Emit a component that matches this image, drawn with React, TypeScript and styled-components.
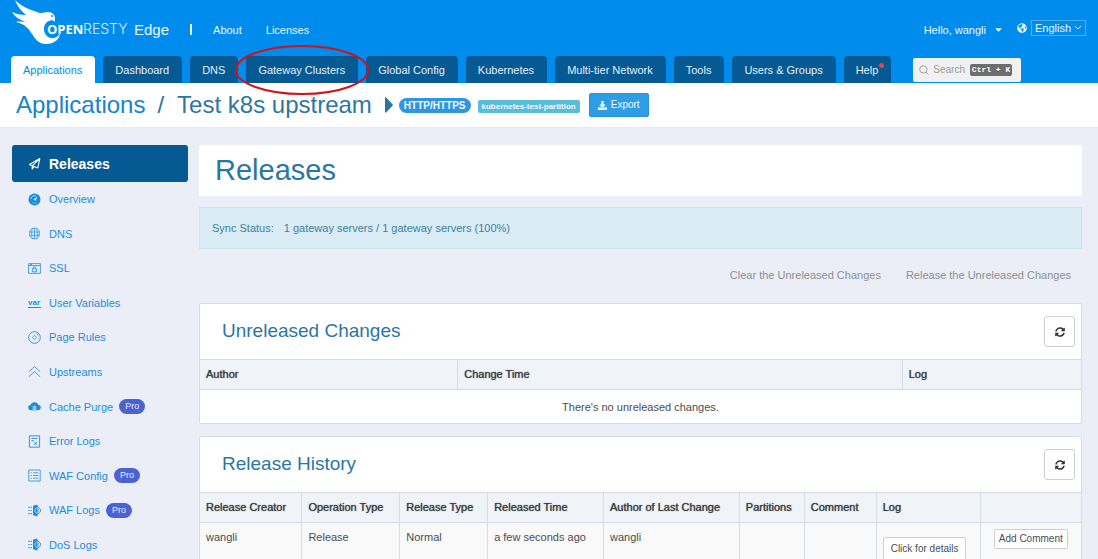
import React from "react";
import styled, { createGlobalStyle, css } from "styled-components";
import { FaDownload, FaGlobeAmericas, FaCaretDown, FaSyncAlt } from "react-icons/fa";

const color = {
  brand: "#008ced",
  navy: "#055a94",
  page: "#ebeef6",
  heading: "#2c76a3",
  link: "#1b8ddb",
  line: "#d5dde2",
  text: "#4a4d50",
};

const GlobalStyle = createGlobalStyle`
  *, *::before, *::after { box-sizing: border-box; }
  body {
    margin: 0;
    background: ${color.page};
    color: ${color.text};
    font: 11px/16px "Liberation Sans", Arial, sans-serif;
  }
  h1, h2, ul, p { margin: 0; padding: 0; font-weight: 400; }
  ul { list-style: none; }
  a { color: inherit; text-decoration: none; }
  button, input, select { font: inherit; color: inherit; }
`;

const Header = styled.header`
  background: ${color.brand};
  color: #e9f6ff;
`;

const TopBar = styled.div`
  display: flex;
  align-items: center;
  height: 56px;
  padding: 0 12px;
`;

const LogoLink = styled.a`
  display: flex;
  align-self: flex-start;
`;

const ProductName = styled.span`
  margin: 3px 0 0 6px;
  font-size: 15px;
`;

const Divider = styled.span`
  width: 2px;
  height: 11px;
  margin: 3px 21px 0 21px;
  background: #e9f6ff;
`;

const TopLinks = styled.nav`
  display: flex;
  gap: 24px;
  margin-top: 3px;
`;

const Account = styled.div`
  display: flex;
  align-items: center;
  margin-left: auto;
`;

const UserButton = styled.button`
  display: flex;
  align-items: center;
  gap: 7px;
  margin: 3px 13px 0 0;
  padding: 0;
  border: 0;
  background: none;
`;

const LanguageField = styled.label`
  display: flex;
  align-items: center;
  gap: 4px;
`;

const LanguageBox = styled.span`
  display: flex;
  align-items: center;
  width: 55px;
  height: 16px;
  padding: 0 3px;
  border: 1px solid #4fb2f5;

  select {
    flex: 1;
    min-width: 0;
    padding: 0;
    border: 0;
    background: none;
    appearance: none;
    line-height: 14px;
  }
  svg { flex: none; }
`;

const TabBar = styled.nav`
  display: flex;
  align-items: flex-end;
  gap: 8px;
  height: 27px;
  padding: 0 11px;
`;

const Tab = styled.a<{ $active?: boolean }>`
  position: relative;
  height: 27px;
  padding: 0 13px 0 12px;
  border-radius: 4px 4px 0 0;
  background: ${(p) => (p.$active ? "#fff" : color.navy)};
  color: ${(p) => (p.$active ? color.brand : "#e4eff7")};
  line-height: 28px;
  white-space: nowrap;
`;

const Highlight = styled.svg`
  position: absolute;
  z-index: 2;
  top: 50%;
  left: 50%;
  transform: translate(-50%, -50%);
  pointer-events: none;
`;

const NoticeDot = styled.span`
  position: absolute;
  top: 7px;
  right: 7px;
  width: 5px;
  height: 5px;
  border-radius: 50%;
  background: #e8453c;
`;

const SearchBox = styled.label`
  display: flex;
  align-items: center;
  gap: 4px;
  width: 108px;
  height: 24px;
  margin: 0 0 1px 14px;
  padding: 0 9px 0 6px;
  border-radius: 2px;
  background: #f1f1f1;
  color: #9b9b9b;
  font-size: 10px;

  input {
    flex: 1;
    min-width: 0;
    padding: 0;
    border: 0;
    background: none;
    outline: 0;
  }
  input::placeholder { color: #9b9b9b; opacity: 1; }
`;

const Shortcut = styled.kbd`
  padding: 0 2px;
  border-radius: 2px;
  background: #6d6d6d;
  color: #fff;
  font: bold 8px/12px "Liberation Mono", monospace;
  white-space: nowrap;
`;

const Breadcrumb = styled.div`
  display: flex;
  align-items: center;
  height: 45px;
  padding: 0 16px;
  border-bottom: 1px solid #e6e9f1;
  background: #fff;
  color: ${color.heading};
  font-size: 24px;
  line-height: 32px;

  > a { color: #1583cd; }
  > h1 { font-size: inherit; }
  > svg { margin: 0 6px 0 13px; }
`;

const Slash = styled.span`
  margin: 0 13px 0 12px;
`;

const ProtocolTag = styled.span`
  padding: 0 5px;
  border-radius: 8px;
  background: #2f96de;
  color: #eef8ff;
  font: bold 10px/15px "Liberation Sans", Arial, sans-serif;
`;

const PartitionTag = styled.span`
  margin: 2px 9px 0 7px;
  padding: 0 4px;
  border-radius: 2px;
  background: #5abcd8;
  color: #eefaff;
  font: bold 8px/13px "Liberation Sans", Arial, sans-serif;
`;

const ExportButton = styled.button`
  display: flex;
  align-items: center;
  gap: 4px;
  height: 24px;
  padding: 0 8px;
  border: 1px solid #2793dc;
  border-radius: 2px;
  background: #2f9de6;
  color: #eef8ff;
  font-size: 10px;
  line-height: 14px;
`;

const Layout = styled.div`
  display: grid;
  grid-template-columns: 176px minmax(0, 1fr);
  gap: 11px;
  padding: 17px 16px 17px 12px;
`;

const SideList = styled.ul`
  display: grid;
  grid-auto-rows: 1fr;
  height: 380px;
`;

const sideRow = css`
  display: flex;
  align-items: center;
  gap: 8px;
  padding-left: 16px;
  svg { flex: none; }
`;

const SideCurrent = styled.a`
  ${sideRow}
  height: 37px;
  border-radius: 3px;
  background: ${color.navy};
  color: #fff;
  font-size: 14px;
  font-weight: 700;
`;

const SideItem = styled.a`
  ${sideRow}
  height: 100%;
  color: ${color.link};
`;

const ProBadge = styled.span`
  margin-left: -2px;
  padding: 0 6px;
  border-radius: 8px;
  background: #4b63d2;
  color: #e6eaff;
  font-size: 9px;
  line-height: 15px;
`;

const VarIcon = styled.span`
  width: 13px;
  border-bottom: 1px solid currentColor;
  font-size: 8px;
  font-weight: 700;
  line-height: 9px;
`;

const PageTitle = styled.h1`
  padding: 5px 16px 6px;
  background: #fff;
  color: ${color.heading};
  font-size: 29px;
  line-height: 40px;
`;

const SyncStatus = styled.p`
  display: flex;
  gap: 10px;
  margin-top: 11px;
  padding: 11px 12px;
  border: 1px solid #c9e7f0;
  background: #d9ecf5;
  color: #41819f;
  line-height: 18px;
`;

const Actions = styled.div`
  display: flex;
  justify-content: flex-end;
  gap: 25px;
  margin: 17px 11px 19px 0;

  button {
    padding: 0;
    border: 0;
    background: none;
    color: #8d9094;
    line-height: 18px;
  }
`;

const Panel = styled.section`
  border: 1px solid ${color.line};
  border-radius: 2px;
  background: #fff;
  & + & { margin-top: 12px; }
`;

const PanelHead = styled.div`
  display: flex;
  align-items: center;
  justify-content: space-between;
  height: 55px;
  padding: 0 6px 0 22px;

  h2 {
    padding-bottom: 2px;
    color: ${color.heading};
    font-size: 19px;
    line-height: 24px;
  }
`;

const RefreshButton = styled.button`
  display: grid;
  place-items: center;
  width: 31px;
  height: 31px;
  padding: 0;
  border: 1px solid #cfcfcf;
  border-radius: 3px;
  background: #fff;
  color: #333;
`;

const Table = styled.table`
  width: 100%;
  border-collapse: collapse;
  table-layout: fixed;

  th, td {
    padding: 5px 6px 6px;
    border-left: 1px solid ${color.line};
    text-align: left;
    line-height: 18px;
    white-space: nowrap;
    vertical-align: top;
  }
  th {
    border-top: 1px solid ${color.line};
    border-bottom: 1px solid ${color.line};
    background: #f0f3f7;
    color: #3c3f42;
    font-weight: 400;
    text-shadow: 0 0 1px #3c3f42;
  }
  th:first-child, td:first-child { border-left: 0; }
`;

const Col = styled.col<{ $share: number }>`
  width: calc(100% * ${(p) => p.$share} / 882);
`;

const EmptyRow = styled.tr`
  && td {
    padding: 8px 8px 7px;
    text-align: center;
  }
`;

const RecordRow = styled.tr`
  background: #f9f9f9;
`;

const ActionCell = styled.td<{ $drop?: boolean }>`
  && {
    padding-top: ${(p) => (p.$drop ? 14 : 6)}px;
    ${(p) => !p.$drop && "text-align: center;"}
  }
`;

const SmallButton = styled.button<{ $tall?: boolean }>`
  height: ${(p) => (p.$tall ? 24 : 20)}px;
  padding: 0 ${(p) => (p.$tall ? 7 : 4)}px;
  border: 1px solid #cfcfcf;
  border-radius: 2px;
  background: #fff;
  font-size: 10px;
  line-height: 16px;
  vertical-align: top;
`;

const Logo = () => (
  <svg width="116" height="46" viewBox="12 0 116 46" role="img" aria-label="OpenResty">
    <path
      fill="#fff"
      d="M15 0C20 5 27 9 37 12C41 14 44 12 48 12C52 12 55 15 55 18L55 22C53 20 51 20 49 21C46 22 44 25 44 29C44 35 49 39 54 38C58 37 60 34 60 31C61 38 55 44 46 44C39 44 35 39 32 34C29 29 25 24 16 22C20 21 23 22 26 22C20 20 15 17 12 12C16 14 21 15 26 15C21 11 17 6 15 0Z"
    />
    <circle cx="52" cy="16" r="1" fill={color.brand} />
    <text x="47" y="34" fill="#fff" fontFamily="Open Sans, sans-serif" fontWeight="700" fontSize="13">OPEN</text>
    <text x="83" y="34" fill="#d6edff" fontFamily="Inter, sans-serif" fontWeight="300" fontSize="14">RESTY</text>
  </svg>
);

const Glyph = ({ children }: { children: React.ReactNode }) => (
  <svg width="13" height="13" viewBox="0 0 13 13" fill="none" stroke="currentColor" aria-hidden="true">
    {children}
  </svg>
);

const ReleasesIcon = (
  <Glyph>
    <path strokeWidth="1.1" strokeLinejoin="round" d="M11.8 1.6L1.4 7.4 4.2 8.8 9.8 10.9ZM11.8 1.6L4.2 8.8V12L6.2 9.6" />
  </Glyph>
);
const OverviewIcon = (
  <Glyph>
    <circle cx="6.5" cy="6.5" r="6" fill="currentColor" stroke="none" />
    <path d="M3 6a3.6 3.6 0 0 1 5-3" stroke="#d8ecfb" strokeWidth=".8" />
    <path d="M9.6 3.6L7.4 7.7 5.6 6.4Z" fill="#fff" stroke="none" />
    <path d="M4 10h5" stroke="#8fc8f3" strokeWidth=".7" />
  </Glyph>
);
const DnsIcon = (
  <Glyph>
    <path strokeWidth=".7" d="M4 1.3h5L11.3 4v5L9 11.7H4L1.7 9V4ZM6.5 1.3v10.4M1.7 5h9.6M1.7 8.2h9.6M4.3 1.5c-.9 3-.9 7 0 10M8.7 1.5c.9 3 .9 7 0 10" />
  </Glyph>
);
const SslIcon = (
  <Glyph>
    <path strokeWidth=".8" d="M.6 1.6h11.8v9.8H.6ZM.6 3.6h11.8M4.4 6.8h4.2v3H4.4ZM5.2 6.8V6a1.3 1.3 0 0 1 2.6 0v.8M2 2.6h2" />
  </Glyph>
);
const RulesIcon = (
  <Glyph>
    <circle cx="6.5" cy="6.5" r="5.8" strokeWidth=".9" />
    <path strokeWidth=".7" d="M6.5 4.2L8.5 6.5 6.5 8.8 4.5 6.5ZM8.5 2.8l1.7 1.7" />
  </Glyph>
);
const UpstreamIcon = (
  <Glyph>
    <path strokeWidth=".8" d="M.8 6.8L6.5 1.5 12.2 6.8M.8 11.8L6.5 6.5 12.2 11.8" />
  </Glyph>
);
const CacheIcon = (
  <Glyph>
    <path fill="currentColor" stroke="none" d="M3 10.2A2.6 2.6 0 0 1 2.6 5 4.1 4.1 0 0 1 10.4 5 2.6 2.6 0 0 1 10 10.2Z" />
    <path stroke="#b9dcf6" strokeWidth=".9" d="M5.2 6v4M6.5 5.4v4.6M7.8 6v4" />
  </Glyph>
);
const ErrorIcon = (
  <Glyph>
    <path strokeWidth=".9" d="M1.4.8h10.2v11.4H1.4ZM3.4 3.4h6M3.4 5.6h2.4M6.2 6.8l2.8 3M9 6.8l-2.8 3" />
  </Glyph>
);
const ConfigIcon = (
  <Glyph>
    <path strokeWidth=".8" d="M.8 1h11.4v11H.8ZM5 3.8h5.4M5 6.5h5.4M5 9.2h5.4M2.6 3.8h1.2M2.6 6.5h1.2M2.6 9.2h1.2" />
  </Glyph>
);
const FirewallIcon = (
  <Glyph>
    <path fill="currentColor" stroke="none" d="M5 1.8L9.4 .6V12.4L5 11.2Z" />
    <path strokeWidth="1.2" d="M.4 3.4h1.2M2.6 3.4h1.2M.4 6.5h1.2M2.6 6.5h1.2M.4 9.6h1.2M2.6 9.6h1.2" />
    <path strokeWidth=".8" d="M9 2.2L12.4 5v3L9 10.8" />
    <path stroke="#d8ecfb" strokeWidth=".8" d="M8.6 3.8C6.4 5 6.4 8 8.6 9.2" />
    <path strokeWidth=".8" d="M10.2 4.6v3.8" />
  </Glyph>
);

const tabs = [
  "Applications", "Dashboard", "DNS", "Gateway Clusters", "Global Config",
  "Kubernetes", "Multi-tier Network", "Tools", "Users & Groups", "Help",
];

const sideItems: { label: string; icon: React.ReactNode; pro?: boolean }[] = [
  { label: "Overview", icon: OverviewIcon },
  { label: "DNS", icon: DnsIcon },
  { label: "SSL", icon: SslIcon },
  { label: "User Variables", icon: <VarIcon>var</VarIcon> },
  { label: "Page Rules", icon: RulesIcon },
  { label: "Upstreams", icon: UpstreamIcon },
  { label: "Cache Purge", icon: CacheIcon, pro: true },
  { label: "Error Logs", icon: ErrorIcon },
  { label: "WAF Config", icon: ConfigIcon, pro: true },
  { label: "WAF Logs", icon: FirewallIcon, pro: true },
  { label: "DoS Logs", icon: FirewallIcon },
];

const changeColumns: [string, number][] = [["Author", 258], ["Change Time", 445], ["Log", 179]];

const historyColumns: [string, number][] = [
  ["Release Creator", 102], ["Operation Type", 98], ["Release Type", 88],
  ["Released Time", 116], ["Author of Last Change", 136], ["Partitions", 65],
  ["Comment", 72], ["Log", 104], ["", 101],
];

const TableHead = ({ columns }: { columns: [string, number][] }) => (
  <>
    <colgroup>
      {columns.map(([name, share]) => <Col key={name} $share={share} />)}
    </colgroup>
    <thead>
      <tr>{columns.map(([name]) => <th key={name} scope="col">{name}</th>)}</tr>
    </thead>
  </>
);

const PanelHeader = ({ title }: { title: string }) => (
  <PanelHead>
    <h2>{title}</h2>
    <RefreshButton type="button" aria-label={`Refresh ${title}`}>
      <FaSyncAlt size={10} />
    </RefreshButton>
  </PanelHead>
);

export default function App() {
  return (
    <>
      <GlobalStyle />
      <Header>
        <TopBar>
          <LogoLink href="#home"><Logo /></LogoLink>
          <ProductName>Edge</ProductName>
          <Divider />
          <TopLinks>
            <a href="#about">About</a>
            <a href="#licenses">Licenses</a>
          </TopLinks>
          <Account>
            <UserButton type="button">Hello, wangli <FaCaretDown size={11} /></UserButton>
            <LanguageField>
              <FaGlobeAmericas size={10} aria-label="Language" />
              <LanguageBox>
                <select defaultValue="en"><option value="en">English</option></select>
                <svg width="8" height="6" viewBox="0 0 8 6" fill="none" stroke="currentColor" aria-hidden="true">
                  <path d="M1 1l3 3 3-3" />
                </svg>
              </LanguageBox>
            </LanguageField>
          </Account>
        </TopBar>
        <TabBar>
          {tabs.map((name, i) => (
            <Tab key={name} href="#tab" $active={i === 0}>
              {name}
              {name === "Help" && <NoticeDot />}
              {name === "Gateway Clusters" && (
                <Highlight width="136" height="52" viewBox="0 0 136 52" aria-hidden="true">
                  <ellipse cx="68" cy="26" rx="66" ry="24" fill="none" stroke="#d0131b" strokeWidth="2" />
                </Highlight>
              )}
            </Tab>
          ))}
          <SearchBox>
            <svg width="10" height="10" viewBox="0 0 10 10" fill="none" stroke="currentColor" aria-hidden="true">
              <circle cx="4.4" cy="4.4" r="3.7" strokeWidth=".9" />
              <path d="M7.2 7.2L9.6 9.6" strokeWidth=".9" />
            </svg>
            <input type="text" placeholder="Search" aria-label="Search" />
            <Shortcut>Ctrl + K</Shortcut>
          </SearchBox>
        </TabBar>
      </Header>

      <Breadcrumb>
        <a href="#applications">Applications</a>
        <Slash>/</Slash>
        <h1>Test k8s upstream</h1>
        <svg width="8" height="16" viewBox="0 0 8 16" aria-hidden="true">
          <path d="M0 1.2C0 .3 .8 .1 1.4 .7L7.5 7.2Q8.1 8 7.5 8.8L1.4 15.3C.8 15.9 0 15.7 0 14.8Z" fill={color.heading} />
        </svg>
        <ProtocolTag>HTTP/HTTPS</ProtocolTag>
        <PartitionTag>kubernetes-test-partition</PartitionTag>
        <ExportButton type="button"><FaDownload size={9} /> Export</ExportButton>
      </Breadcrumb>

      <Layout>
        <nav aria-label="Application sections">
          <SideCurrent href="#releases" aria-current="page">{ReleasesIcon} Releases</SideCurrent>
          <SideList>
            {sideItems.map((item) => (
              <li key={item.label}>
                <SideItem href="#section">
                  {item.icon}
                  {item.label}
                  {item.pro && <ProBadge>Pro</ProBadge>}
                </SideItem>
              </li>
            ))}
          </SideList>
        </nav>

        <main>
          <PageTitle>Releases</PageTitle>
          <SyncStatus>
            <span>Sync Status:</span>
            <span>1 gateway servers / 1 gateway servers (100%)</span>
          </SyncStatus>
          <Actions>
            <button type="button">Clear the Unreleased Changes</button>
            <button type="button">Release the Unreleased Changes</button>
          </Actions>
          <Panel>
            <PanelHeader title="Unreleased Changes" />
            <Table>
              <TableHead columns={changeColumns} />
              <tbody>
                <EmptyRow><td colSpan={3}>There's no unreleased changes.</td></EmptyRow>
              </tbody>
            </Table>
          </Panel>
          <Panel>
            <PanelHeader title="Release History" />
            <Table>
              <TableHead columns={historyColumns} />
              <tbody>
                <RecordRow>
                  <td>wangli</td>
                  <td>Release</td>
                  <td>Normal</td>
                  <td>a few seconds ago</td>
                  <td>wangli</td>
                  <td />
                  <td />
                  <ActionCell $drop><SmallButton type="button" $tall>Click for details</SmallButton></ActionCell>
                  <ActionCell><SmallButton type="button">Add Comment</SmallButton></ActionCell>
                </RecordRow>
              </tbody>
            </Table>
          </Panel>
        </main>
      </Layout>
    </>
  );
}
